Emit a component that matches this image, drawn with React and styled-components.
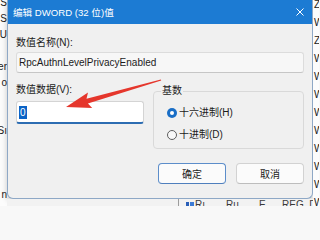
import React from "react";
import styled, { createGlobalStyle } from "styled-components";

const GlobalStyle = createGlobalStyle`
  html, body { margin: 0; padding: 0; background: #f8f8f8; overflow: hidden; }
  body { font-family: "Liberation Sans", "Noto Sans CJK SC", sans-serif; font-size: 10px; color: #1b1b1b; }
  * { box-sizing: border-box; }
`;

const Page = styled.div`
  position: relative;
  width: 319px;
  height: 206px;
  overflow: hidden;
  display: grid;
  grid-template-columns: 7px 306px 6px;
  grid-template-rows: 199px 7px;
  background: #fbfbfb;
`;

const SideStrip = styled.div`
  grid-row: 1 / 3;
  grid-column: ${(p) => (p.$right ? 3 : 1)};
  display: flex;
  flex-direction: column;
  overflow: hidden;
  background: #fcfcfc;
`;

const SideLine = styled.div`
  flex: none;
  height: ${(p) => p.$h}px;
  line-height: ${(p) => p.$h}px;
  display: flex;
  justify-content: ${(p) => (p.$right ? "flex-start" : "flex-end")};
  padding-left: ${(p) => (p.$right ? 1 : 0)}px;
  overflow: hidden;
  white-space: nowrap;
  color: #202020;
  font-size: 10px;
  &:first-child { margin-top: ${(p) => p.$offset}px; }
`;

const Dialog = styled.div`
  grid-row: 1;
  grid-column: 2;
  display: flex;
  flex-direction: column;
  background: #f0f0f0;
  border: 1px solid #8ea8c6;
  border-top: none;
  border-radius: 0 0 6px 6px;
  box-shadow: 0 2px 6px rgba(0, 0, 0, 0.22);
  overflow: hidden;
`;

const TitleBar = styled.div`
  height: 24px;
  flex: none;
  background: #1c7bd3;
  color: #ffffff;
  display: flex;
  align-items: center;
  justify-content: space-between;
  padding: 0 8px 0 5px;
  font-size: 9.6px;
`;

const Body = styled.div`
  display: flex;
  flex-direction: column;
  padding: 13px 8px 14px;
`;

const Label = styled.div`
  height: 12px;
  line-height: 12px;
  white-space: nowrap;
  color: #1b1b1b;
`;

const ReadOnlyField = styled.div`
  margin-top: 3px;
  height: 21px;
  line-height: 19px;
  padding-left: 2px;
  background: #f7f7f7;
  border: 1px solid #dcdcdc;
  border-bottom-color: #c6c6c6;
  border-radius: 3px;
  color: #1b1b1b;
  white-space: nowrap;
`;

const Row = styled.div`
  margin-top: 11px;
  height: 65px;
  display: grid;
  grid-template-columns: 128px minmax(0, 1fr);
  column-gap: 9px;
  align-items: start;
`;

const Column = styled.div`
  display: flex;
  flex-direction: column;
`;

const Input = styled.div`
  margin-top: 5px;
  height: 23px;
  background: #ffffff;
  border: 1px solid #d4d4d4;
  border-bottom: 2px solid #2d6db2;
  border-radius: 3px;
  padding-left: 2px;
  display: flex;
  align-items: center;
`;

const Selected = styled.span`
  background: #0b63c6;
  color: #ffffff;
  line-height: 13px;
  padding: 0 1px;
`;

const Group = styled.fieldset`
  margin: 1px 0 0;
  padding: 9px 8px 6px 13px;
  border: 1px solid #d9d9d9;
  border-radius: 4px;
  min-width: 0;
  display: flex;
  flex-direction: column;
  gap: 8px;
`;

const Legend = styled.legend`
  margin-left: -6px;
  padding: 0 1px;
  line-height: 12px;
  height: 12px;
  color: #1b1b1b;
`;

const RadioRow = styled.label`
  display: flex;
  align-items: center;
  gap: 2px;
  height: 14px;
  line-height: 14px;
  white-space: nowrap;
  color: #1b1b1b;
`;

const RadioDot = styled.span`
  flex: none;
  width: 10px;
  height: 10px;
  border-radius: 50%;
  background: ${(p) => (p.$on ? "#1a6ec6" : "#f8f8f8")};
  border: ${(p) => (p.$on ? "none" : "1px solid #5e5e5e")};
  display: flex;
  align-items: center;
  justify-content: center;
  &::after {
    content: "";
    display: ${(p) => (p.$on ? "block" : "none")};
    width: 4px;
    height: 4px;
    border-radius: 50%;
    background: #ffffff;
  }
`;

const Buttons = styled.div`
  margin-top: 14px;
  display: flex;
  justify-content: flex-end;
  gap: 10px;
`;

const Button = styled.button`
  width: 68px;
  height: 21px;
  padding: 0;
  font: inherit;
  font-size: 10px;
  color: #1b1b1b;
  background: #fbfbfb;
  border: 1px solid ${(p) => (p.$primary ? "#5c8dca" : "#d2d2d2")};
  border-bottom-color: ${(p) => (p.$primary ? "#4f7fbd" : "#bdbdbd")};
  border-radius: 4px;
`;

const BottomStrip = styled.div`
  grid-row: 2;
  grid-column: 2;
  min-width: 0;
  background: #f2f2f2;
  display: grid;
  grid-template-columns: 172px 16px 31px 33px 23px minmax(0, 1fr);
  overflow: hidden;
  font-size: 10px;
  line-height: 10px;
  color: #3a3a3a;
  white-space: nowrap;
`;

const Cell = styled.div`
  min-width: 0;
  overflow: hidden;
  padding-top: 1px;
  padding-left: ${(p) => p.$pl || 0}px;
  border-right: ${(p) => (p.$divider ? "1px solid #9c9c9c" : "none")};
`;

const Overlay = styled.svg`
  position: absolute;
  left: 0;
  top: 0;
  pointer-events: none;
`;

const leftLines = ["S", "S", "U", "", "er", "o", "", "", "Sı", "", "", "", "n", ""];
const rightLines = ["Z", "W", "Z", "W", "W", "W", "W", "W", "W", "W", "W", "W"];

export default function App() {
  return (
    <>
      <GlobalStyle />
      <Page>
        <SideStrip>
          {leftLines.map((t, i) => (
            <SideLine key={i} $h={16} $offset={-5}>
              {t}
            </SideLine>
          ))}
        </SideStrip>

        <Dialog>
          <TitleBar>
            <span>编辑 DWORD (32 位)值</span>
            <svg width="8" height="8" viewBox="0 0 8 8">
              <path d="M0.5 0.5 L7.5 7.5 M7.5 0.5 L0.5 7.5" stroke="#ffffff" strokeWidth="1" />
            </svg>
          </TitleBar>
          <Body>
            <Label>数值名称(N):</Label>
            <ReadOnlyField>RpcAuthnLevelPrivacyEnabled</ReadOnlyField>
            <Row>
              <Column>
                <Label>数值数据(V):</Label>
                <Input>
                  <Selected>0</Selected>
                </Input>
              </Column>
              <Group>
                <Legend>基数</Legend>
                <RadioRow>
                  <RadioDot $on />
                  十六进制(H)
                </RadioRow>
                <RadioRow>
                  <RadioDot />
                  十进制(D)
                </RadioRow>
              </Group>
            </Row>
            <Buttons>
              <Button $primary>确定</Button>
              <Button>取消</Button>
            </Buttons>
          </Body>
        </Dialog>

        <SideStrip $right>
          {rightLines.map((t, i) => (
            <SideLine key={i} $h={18} $offset={-4} $right>
              {t}
            </SideLine>
          ))}
        </SideStrip>

        <BottomStrip>
          <Cell $divider />
          <Cell $pl={7}>
            <svg width="8" height="7" viewBox="0 0 8 7">
              <rect x="0" y="1" width="3" height="6" fill="#2a5fb8" />
              <rect x="4" y="1" width="4" height="6" fill="#3b7bd6" />
            </svg>
          </Cell>
          <Cell>Rı</Cell>
          <Cell>Ru</Cell>
          <Cell>E</Cell>
          <Cell>REG_DWORD</Cell>
        </BottomStrip>

        <Overlay width="319" height="206" viewBox="0 0 319 206">
          <polygon
            points="160.8,79.4 86.5,98.7 88.0,92.6 66,107 92.2,108.0 87.9,103.5 161.2,80.6"
            fill="#e5362c"
          />
        </Overlay>
      </Page>
    </>
  );
}
